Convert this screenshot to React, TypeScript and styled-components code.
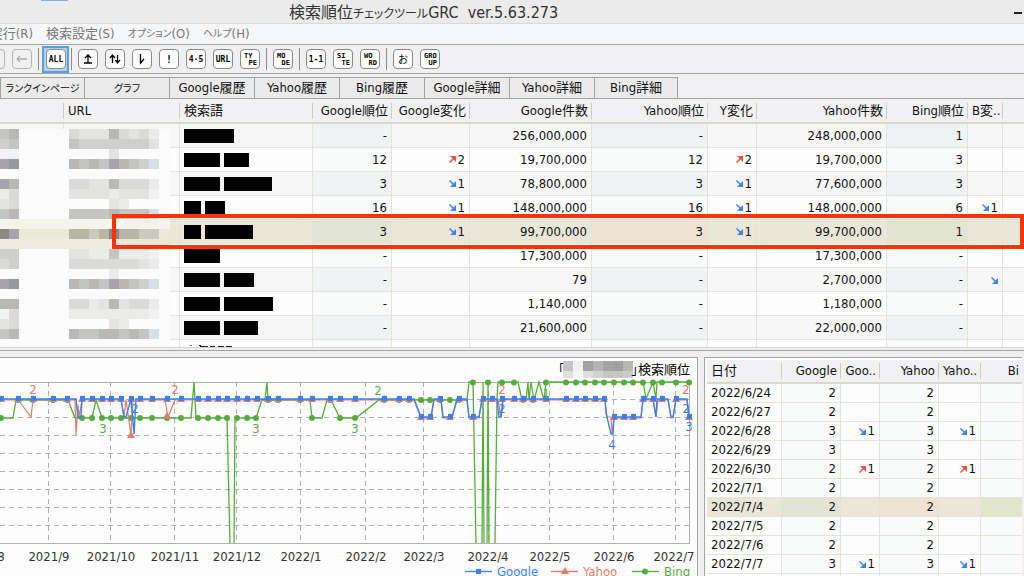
import React from "react";
import styled, { createGlobalStyle, css } from "styled-components";

const latin = `"DejaVu Sans Condensed", "Noto Sans", "Noto Sans CJK JP", sans-serif`;
const LINE = "#e6e4d8";
const EDGE = "#a5a49c";

const Global = createGlobalStyle`
  *, *::before, *::after { box-sizing: border-box; }
  body {
    margin: 0;
    background: #f0f0f2;
    color: #111;
    font-family: ${latin};
    font-size: 13px;
    line-height: 16px;
    font-feature-settings: "palt";
  }
  button { font: inherit; font-feature-settings: inherit; color: inherit; padding: 0; }
`;

const Window = styled.div`
  display: flex;
  flex-direction: column;
  height: 100vh;
  overflow: hidden;
`;

/* Katakana are set smaller than the kanji beside them. */
const Kana = styled.span<{ $size?: number }>`
  font-size: ${(p) => p.$size ?? 10}px;
`;

/* ---------- title and menu ---------- */
const TitleBar = styled.header`
  display: flex;
  align-items: center;
  justify-content: space-between;
  flex: none;
  height: 24px;
  padding: 3px 2px 0 289px;
  background: #ebebeb;
  border-bottom: 1px solid #d9d9d9;
`;
const Title = styled.h1`
  margin: 0;
  font-size: 16px;
  line-height: 20px;
  font-weight: 400;
  color: #333;
  white-space: pre;
`;
const Minimise = styled.button`
  width: 8px;
  height: 2px;
  margin-bottom: 1px;
  border: 0;
  background: #222;
`;
const TopMark = styled.div`
  position: absolute;
  top: 0;
  left: 41px;
  width: 27px;
  height: 1px;
  background: #7fb2e5;
`;
const MenuBar = styled.nav`
  display: flex;
  gap: 13px;
  flex: none;
  height: 21px;
  background: #f5f6f7;
  border-bottom: 1px solid ${EDGE};
`;
const MenuItem = styled.button<{ $w?: number }>`
  display: flex;
  align-items: center;
  justify-content: flex-end;
  flex: none;
  ${(p) => p.$w && `width: ${p.$w}px;`}
  border: 0;
  background: none;
  color: #777;
  white-space: nowrap;
`;

/* ---------- toolbar ---------- */
const ToolBar = styled.div`
  display: flex;
  align-items: center;
  gap: 7px;
  flex: none;
  height: 29px;
  border-bottom: 1px solid ${EDGE};
  overflow: hidden;
`;
const Key = styled.span<{ $dim?: boolean }>`
  display: flex;
  align-items: center;
  justify-content: center;
  flex: none;
  width: 20px;
  height: 20px;
  border: 1px solid ${(p) => (p.$dim ? "#b5b5b5" : "#8a8a86")};
  border-radius: 4px;
  background: ${(p) => (p.$dim ? "#f0f0f0" : "#fdfdfd")};
  color: ${(p) => (p.$dim ? "#aaa" : "#000")};
`;
const ToolButton = styled.button<{ $active?: boolean; $cut?: boolean }>`
  display: flex;
  align-items: center;
  justify-content: center;
  flex: none;
  width: 20px;
  height: 27px;
  border: 0;
  background: none;
  ${(p) =>
    p.$active &&
    css`
      width: 27px;
      margin: 0 -4px 0 -3px;
      border: 2px solid #5c9fe0;
      background: #b4d2f0;
    `}
  ${(p) =>
    p.$cut &&
    css`
      width: 5px;
      justify-content: flex-end;
    `}
`;
const Divider = styled.i`
  flex: none;
  width: 1px;
  height: 22px;
  margin: 0 -1px;
  background: #8c8c88;
`;

/* ---------- tabs ---------- */
const TabStrip = styled.div`
  display: flex;
  align-items: flex-end;
  flex: none;
  height: 25px;
  border-bottom: 1px solid ${EDGE};
`;
const Tab = styled.button`
  width: 85px;
  height: 21px;
  border: 1px solid ${EDGE};
  border-width: 1px 1px 0 0;
  background: #ebebec;
  white-space: nowrap;
  &:first-child { border-left-width: 1px; }
  &:last-child { width: 83px; }
`;

/* ---------- grids ---------- */
const Grid = styled.table`
  width: 100%;
  table-layout: fixed;
  border-collapse: separate;
  border-spacing: 0;
`;
const HeadRow = styled.tr<{ $h: number }>`
  height: ${(p) => p.$h}px;
`;
const Head = styled.th`
  padding: 3px 0;
  border-bottom: 2px solid #dad8cd;
  background: #f1f1f3;
  font-weight: 400;
`;
const HeadLabel = styled.div<{ $left?: boolean }>`
  height: 16px;
  padding: 0 3px 0 4px;
  border-right: 1px solid #cfcdc0;
  text-align: ${(p) => (p.$left ? "left" : "right")};
  white-space: nowrap;
  th:last-child > & { border-right: 0; }
`;
const Row = styled.tr<{ $h: number; $odd?: boolean; $sel?: boolean }>`
  height: ${(p) => p.$h}px;
  background: ${(p) => (p.$sel ? "#eae7d8" : p.$odd ? "#f7f7f8" : "#fdfdfd")};
`;
const tint = { g: "#e2e4d6", y: "#ede2d3", b: "#e3e6cf" };
const Cell = styled.td<{ $rank?: "g" | "y" | "b"; $odd?: boolean; $sel?: boolean; $left?: boolean }>`
  padding: 0 4px;
  border-right: 1px solid ${LINE};
  border-bottom: 1px solid ${LINE};
  text-align: ${(p) => (p.$left ? "left" : "right")};
  white-space: nowrap;
  ${(p) => p.$rank && `background: ${p.$sel ? tint[p.$rank] : p.$odd ? "#f0f3f4" : "#f9fafa"};`}
  &:last-child { border-right: 0; }
`;
const Change = styled.span`
  display: inline-flex;
  align-items: center;
  gap: 2px;
`;
const Masks = styled.div`
  display: flex;
  gap: 4px;
`;
const Mask = styled.span<{ $w: number }>`
  width: ${(p) => p.$w}px;
  height: 14px;
  background: #000;
`;

const RankPane = styled.section`
  position: relative;
  flex: none;
  height: 249px;
  overflow: hidden;
  background: #fdfdfd;
  border-bottom: 1px solid #d4d4d4;
`;
const Mosaic = styled.svg`
  position: absolute;
  top: 30px;
  left: 0;
`;
const Highlight = styled.div`
  position: absolute;
  top: 115px;
  left: 112px;
  right: 0;
  height: 35px;
  border: 4px solid #ff3300;
`;

const Lower = styled.div`
  display: flex;
  gap: 6px;
  flex: 1;
  min-height: 0;
  margin-top: 2px;
  padding: 6px 2px 0 0;
  border-top: 1px solid ${EDGE};
`;
const ChartPane = styled.section`
  display: flex;
  justify-content: flex-end;
  flex: 1;
  min-width: 0;
  border: 1px solid ${EDGE};
  border-width: 1px 1px 0 0;
  background: #fdfdfd;
  overflow: hidden;
`;
const ChartDrawing = styled.svg`
  flex: none;
`;
const HistoryPane = styled.section`
  flex: none;
  width: 318px;
  padding: 2px 0 0 2px;
  border: 1px solid ${EDGE};
  border-width: 1px 0 0 1px;
  background: #fdfdfd;
  overflow: hidden;
`;

/* ---------- icons ---------- */
type Glyph = string | string[];
const keyFont = `"DejaVu Sans Mono", "Noto Sans CJK JP", monospace`;

const arrows: Record<string, string> = {
  back: "M4 9H14M4 9L7 6M4 9L7 12",
  top: "M5 13H13M9 13V5M6 8L9 5L12 8",
  updown: "M6.500 13V5M4 8L6.500 5L9 8M11.500 5V13M9.500 10L11.500 13L14 10",
  hook: "M7.500 4V13L11 9",
};

function KeyFace({ g }: { g: Glyph }) {
  if (Array.isArray(g)) {
    return (
      <svg width="18" height="18" fontFamily={keyFont} fontSize="7" fontWeight="700">
        <text x="3" y="8">{g[0]}</text>
        <text x="16" y="15" textAnchor="end">{g[1]}</text>
      </svg>
    );
  }
  if (arrows[g]) {
    return (
      <svg width="18" height="18" fill="none" stroke="currentColor" strokeWidth="1.300">
        <path d={arrows[g]} />
      </svg>
    );
  }
  if (g === "お") {
    return (
      <svg width="18" height="18" fontFamily={keyFont} fontSize="10">
        <text x="9" y="13" textAnchor="middle">{g}</text>
      </svg>
    );
  }
  return (
    <svg width="18" height="18" fontFamily={keyFont} fontSize={g.length > 1 ? 8 : 10} fontWeight="700">
      <text x="9" y={g.length > 1 ? 12 : 13} textAnchor="middle">{g}</text>
    </svg>
  );
}

const Arrow = ({ up }: { up?: boolean }) => (
  <svg width="7" height="7" fill="none" stroke={up ? "#e8543f" : "#3f82f0"} strokeWidth="1.500">
    {up ? (
      <>
        <path d="M0.500 6.500L5 2" />
        <path d="M1 0H7V6L4 3Z" fill="#e8543f" stroke="none" />
      </>
    ) : (
      <>
        <path d="M0.500 0.500L5 5" />
        <path d="M7 1V7H1L4 4Z" fill="#3f82f0" stroke="none" />
      </>
    )}
  </svg>
);

function Delta({ v }: { v: string }) {
  if (!v) return null;
  return (
    <Change>
      <Arrow up={v[0] === "+"} />
      {v.slice(1)}
    </Change>
  );
}

/* ---------- data ---------- */
const tools: (Glyph | null)[] = [
  "top", "updown", "hook", "!", "4·5", "URL", ["TY", "PE"], null,
  ["MO", "DE"], null, "1-1", ["SI", "TE"], ["WO", "RD"], null, "お", ["GRO", "UP"],
];
const kanaTabs = ["ランクインページ", "グラフ"];
const tabs = ["Google履歴", "Yahoo履歴", "Bing履歴", "Google詳細", "Yahoo詳細", "Bing詳細"];

const rankCols: [string, number | null][] = [
  ["", 64], ["URL", 116], ["検索語", 133], ["Google順位", 79], ["Google変化", 78], ["Google件数", 122],
  ["Yahoo順位", 116], ["Y変化", 49], ["Yahoo件数", 130], ["Bing順位", 81], ["B変..", 35], ["", null],
];
type Rank = { m: number[]; v: string[] };
const ranks: Rank[] = [
  { m: [50], v: ["-", "", "256,000,000", "-", "", "248,000,000", "1", ""] },
  { m: [36, 25], v: ["12", "+2", "19,700,000", "12", "+2", "19,700,000", "3", ""] },
  { m: [36, 48], v: ["3", "-1", "78,800,000", "3", "-1", "77,600,000", "3", ""] },
  { m: [17, 20], v: ["16", "-1", "148,000,000", "16", "-1", "148,000,000", "6", "-1"] },
  { m: [17, 48], v: ["3", "-1", "99,700,000", "3", "-1", "99,700,000", "1", ""] },
  { m: [36], v: ["-", "", "17,300,000", "-", "", "17,300,000", "-", ""] },
  { m: [36, 30], v: ["-", "", "79", "-", "", "2,700,000", "-", "-"] },
  { m: [36, 49], v: ["-", "", "1,140,000", "-", "", "1,180,000", "-", ""] },
  { m: [36, 34], v: ["-", "", "21,600,000", "-", "", "22,000,000", "-", ""] },
  { m: [], v: ["", "", "", "", "", "", "", ""] },
];
const rankKind: Record<number, "g" | "y" | "b"> = { 0: "g", 3: "y", 6: "b" };

const historyCols: [string, number | null][] = [
  ["日付", 75], ["Google", 59], ["Goo..", 39], ["Yahoo", 59], ["Yaho..", 42], ["Bi", null],
];
const history: string[][] = [
  ["2022/6/24", "2", "", "2", ""],
  ["2022/6/27", "2", "", "2", ""],
  ["2022/6/28", "3", "-1", "3", "-1"],
  ["2022/6/29", "3", "", "3", ""],
  ["2022/6/30", "2", "+1", "2", "+1"],
  ["2022/7/1", "2", "", "2", ""],
  ["2022/7/4", "2", "", "2", ""],
  ["2022/7/5", "2", "", "2", ""],
  ["2022/7/6", "2", "", "2", ""],
  ["2022/7/7", "3", "-1", "3", "-1"],
  ["", "", "", "", ""],
];

/* One string per 10px band: two blocks at the left edge, then nine in the URL column. */
const mosaicShades: Record<string, string> = {
  a: "#98979a", b: "#a6a4aa", c: "#b9b8b5", d: "#c4c4c2", e: "#cfcfce", f: "#dadad8",
  g: "#e3e3e2", h: "#ebebea", i: "#f1f2f3", k: "#b8b4a6", l: "#8c8880", m: "#d8dfe6", n: "#ccc9bd",
};
const mosaic = [
  "dc fggg cfgfh", "ed deee eeeeg", "ii .... g....", "ba cdcd bcdem", ".. .... .....",
  "bc ffgg cfffh", "hf gggg hgggi", "gf .... gh...", "dc dddd cdddm", "",
  "lb kknk lkknn", "", "ee gghh dhhhi", "fe ffff fffgh", ".. .... h....",
  "ba cdcd bcdem", ".. .... .....", "cc ffhg cgffh", "if hhhh hhhhi", "gf .... gh...",
  "dc cddc cdcdm", "..",
];

function MosaicLayer() {
  const blocks: React.ReactNode[] = [];
  mosaic.forEach((line, r) => {
    const s = line.replace(/ /g, "");
    for (let i = 0; i < s.length; i++) {
      const fill = mosaicShades[s[i]];
      if (!fill) continue;
      const x = i < 2 ? i * 10 - 1 : 69 + (i - 2) * 10;
      blocks.push(<rect key={r + "-" + i} x={x} y={r * 10} width="10" height="10" fill={fill} />);
    }
  });
  return (
    <Mosaic width="170" height="219" shapeRendering="crispEdges">
      <rect width="170" height="219" fill="#fbfbfb" />
      <rect y="90" width="170" height="10" fill="#f4f4ea" />
      <rect y="100" width="170" height="20" fill="#ebe8da" />
      <rect y="110" width="112" height="10" fill="#eeece0" />
      {blocks}
    </Mosaic>
  );
}

/* ---------- chart ---------- */
const G = "#55ad3f", B = "#3c7ff0", Y = "#e27b69";
const months: [number, string][] = [
  [-16, "2021/8"], [49, "2021/9"], [111, "2021/10"], [175, "2021/11"], [237, "2021/12"], [301, "2022/1"],
  [366, "2022/2"], [424, "2022/3"], [488, "2022/4"], [550, "2022/5"], [614, "2022/6"], [674, "2022/7"],
];
const gridX = [48, 110, 174, 236, 300, 365, 423, 488, 549, 613, 675];
const gridY = [399, 417, 435, 453, 471, 489, 507, 525];

const topBlue = [1, 18, 33, 53, 67, 82, 92, 102, 111, 121, 131, 140, 152, 167, 181, 198, 208, 218, 227, 237, 247, 257, 268, 278,
  300, 312, 330, 340, 355, 384, 399, 409, 440, 459, 483, 492, 502, 514, 523, 533, 546, 566, 576, 585, 595, 604, 643, 653, 662, 676];
const lowBlue = [421, 430, 450, 473, 614, 624, 633, 689];
const greenLow = [1, 82, 92, 102, 111, 121, 131, 140, 152, 167, 181, 198, 208, 218, 227, 237, 247, 256, 312, 340, 355];
const greenMid = [18, 33, 53, 67, 268, 278, 300, 330, 384, 399, 409, 421, 430, 440, 450, 459, 523, 533];
const greenTop = [473, 488, 502, 514, 546, 566, 576, 585, 595, 604, 614, 624, 633, 643, 653, 662, 676, 689];

const greenPath =
  "M0 418H13L16 400H68L75 418H92L96 400L102 418H191L194 382L196 418H227L230 543M234 543L235 418H256L262 400H265L267 382L268 400H310L312 418H322L327 400H331L340 418H356L379 400H467L469 382H473L476 543M482 543L483 382L484 543M487 543L488 382L489 543M495 543L497 399L498 382H518L522 400H526L528 382L529 400L531 382L534 400L539 382L544 400L546 382H643L646 399L653 382L656 399L657 382H690";
const yahooPath =
  "M0 400H18L31 417L33 400H75L76 435L78 405L79 417L82 400H121L124 417L126 400L131 435L133 400H165L168 417L175 400H414L421 418H431L434 400H441L443 418H452L457 400H467L469 418H479L482 400H498L501 417L503 400H605L607 417H611L612 433L614 418H641L643 400H653L656 417L658 400H668L671 418H673L676 400H687L689 418";
const bluePath =
  "M0 399H76L78 417H81L82 399H121L124 417H126L131 399L134 434L136 399H414L421 417H431L434 399H441L443 417H452L457 399H467L469 417H479L482 399H497L499 417H501L503 399H605L606 413L611 434H613L614 417H641L643 399H653L656 417L657 399H668L671 417H673L676 399H687L689 417";

const triangle = (x: number, y: number) => `M${x - 4} ${y + 3}L${x} ${y - 4}L${x + 4} ${y + 3}Z`;
const tags: [number, number, string, string][] = [
  [33, 394, "2", Y], [175, 394, "2", Y], [103, 433, "3", G], [135, 413, "2", B], [256, 433, "3", G],
  [355, 433, "3", G], [378, 395, "2", G], [502, 394, "2", Y], [502, 413, "2", B], [546, 398, "1", G],
  [612, 449, "4", B], [686, 394, "2", Y], [686, 413, "2", B], [689, 431, "3", B],
];
const titleBlocks = [
  "#c4c4c6", "#f0f0f2", "#a2a2a2", "#b4b4b6", "#a4a4a4", "#a0a0a0", "#b6b6b4",
  "#e0e2e0", "#f4f4f4", "#e0dede", "#d0d2d0", "#c4c6c4", "#c6c6c8", "#cacaca",
];

function Chart() {
  return (
    <ChartDrawing width="697" height="218" viewBox="0 358 697 218" fontFamily={latin} fontSize="13">
      <g stroke="#b0b0b0" fill="none" shapeRendering="crispEdges">
        <g strokeDasharray="5 4">
          {gridY.map((y) => <path key={y} d={`M0 ${y}.5H690`} />)}
          {gridX.map((x) => <path key={x} d={`M${x}.5 382V543`} />)}
        </g>
        <path d="M0 382.500H689.500V543.500H0" />
      </g>
      <text x="558" y="374">「</text>
      {titleBlocks.map((c, i) => (
        <rect key={i} x={563 + (i % 7) * 10} y={i < 7 ? 361 : 371} width="10" height={i < 7 ? 10 : 7} fill={c} />
      ))}
      <text x="690" y="374" textAnchor="end">」検索順位</text>

      <path d={greenPath} fill="none" stroke={G} strokeWidth="1.300" />
      <g fill={G}>
        {greenLow.map((x) => <circle key={"l" + x} cx={x} cy="418" r="3" />)}
        {greenMid.map((x) => <circle key={"m" + x} cx={x} cy="400" r="3" />)}
        {greenTop.map((x) => <circle key={"t" + x} cx={x} cy="382.500" r="3" />)}
      </g>
      <path d={yahooPath} fill="none" stroke={Y} strokeWidth="1.200" />
      <g fill={Y}>
        {topBlue.map((x) => <path key={x} d={triangle(x, 399)} />)}
        {lowBlue.map((x) => <path key={x} d={triangle(x, 417)} />)}
        <path d={triangle(131, 435)} />
        <path d={triangle(167, 416)} />
      </g>
      <path d={bluePath} fill="none" stroke={B} strokeWidth="1.400" />
      <g fill={B} shapeRendering="crispEdges">
        {topBlue.map((x) => <rect key={x} x={x - 2} y="396" width="5" height="5" />)}
        {lowBlue.map((x) => <rect key={x} x={x - 2} y="414" width="5" height="5" />)}
      </g>
      <g textAnchor="middle">
        {tags.map(([x, y, t, c], i) => <text key={i} x={x} y={y} fill={c}>{t}</text>)}
      </g>
      <g textAnchor="middle" fill="#333">
        {months.map(([x, t]) => <text key={t} x={x} y="561">{t}</text>)}
      </g>
      <g strokeWidth="1.300">
        <path d="M465 571.500H492" stroke={B} />
        <rect x="476" y="569" width="5" height="5" fill={B} />
        <text x="497" y="576" fill={B}>Google</text>
        <path d="M551 571.500H578" stroke={Y} />
        <path d={triangle(565, 571)} fill={Y} />
        <text x="583" y="576" fill={Y}>Yahoo</text>
        <path d="M632 571.500H659" stroke={G} />
        <circle cx="645" cy="571.500" r="3" fill={G} />
        <text x="664" y="576" fill={G}>Bing</text>
      </g>
    </ChartDrawing>
  );
}

const Columns = ({ cols }: { cols: [string, number | null][] }) => (
  <colgroup>
    {cols.map(([, w], i) => <col key={i} width={w ?? undefined} />)}
  </colgroup>
);

/* Tops of the next row's letters, showing above the pane's edge. */
const RowPeek = () => (
  <svg width="60" height="22" shapeRendering="crispEdges">
    <path d="M6 5.500H8" stroke="#3a7fd0" />
    <path d="M15 5.500H17M16 6.500H24M26 6.500H31M34 6.500H40M42 6.500H48" stroke="#222" />
  </svg>
);

export default function App() {
  return (
    <>
      <Global />
      <Window>
        <TitleBar>
          <TopMark />
          <Title>検索順位<Kana $size={12}>チェックツール</Kana>{"GRC  ver.5.63.273"}</Title>
          <Minimise aria-label="最小化" />
        </TitleBar>
        <MenuBar>
          <MenuItem $w={33}>実行(R)</MenuItem>
          <MenuItem>検索設定(S)</MenuItem>
          <MenuItem><Kana>オプション</Kana>(O)</MenuItem>
          <MenuItem><Kana>ヘルプ</Kana>(H)</MenuItem>
        </MenuBar>
        <ToolBar role="toolbar">
          <ToolButton $cut aria-label="進む"><Key $dim><KeyFace g="back" /></Key></ToolButton>
          <ToolButton aria-label="戻る"><Key $dim><KeyFace g="back" /></Key></ToolButton>
          <Divider />
          <ToolButton $active><Key><KeyFace g="ALL" /></Key></ToolButton>
          <Divider />
          {tools.map((g, i) =>
            g === null ? <Divider key={i} /> : (
              <ToolButton key={i}><Key><KeyFace g={g} /></Key></ToolButton>
            )
          )}
        </ToolBar>
        <TabStrip>
          {kanaTabs.map((t) => <Tab key={t}><Kana>{t}</Kana></Tab>)}
          {tabs.map((t) => <Tab key={t}>{t}</Tab>)}
        </TabStrip>

        <RankPane>
          <Grid>
            <Columns cols={rankCols} />
            <thead>
              <HeadRow $h={25}>
                {rankCols.map(([t], i) => <Head key={i}><HeadLabel $left={i < 3}>{t}</HeadLabel></Head>)}
              </HeadRow>
            </thead>
            <tbody>
              {ranks.map((r, n) => {
                const odd = n % 2 === 0;
                const sel = n === 4;
                return (
                  <Row key={n} $h={24} $odd={odd} $sel={sel}>
                    <Cell />
                    <Cell />
                    <Cell $left>
                      {r.m.length ? <Masks>{r.m.map((w, i) => <Mask key={i} $w={w} />)}</Masks> : <RowPeek />}
                    </Cell>
                    {r.v.map((v, i) => (
                      <Cell key={i} $rank={rankKind[i]} $odd={odd} $sel={sel}>
                        {i === 1 || i === 4 || i === 7 ? <Delta v={v} /> : v}
                      </Cell>
                    ))}
                    <Cell />
                  </Row>
                );
              })}
            </tbody>
          </Grid>
          <MosaicLayer />
          <Highlight />
        </RankPane>

        <Lower>
          <ChartPane><Chart /></ChartPane>
          <HistoryPane>
            <Grid>
              <Columns cols={historyCols} />
              <thead>
                <HeadRow $h={23}>
                  {historyCols.map(([t], i) => <Head key={i}><HeadLabel $left={i === 0}>{t}</HeadLabel></Head>)}
                </HeadRow>
              </thead>
              <tbody>
                {history.map((r, n) => {
                  const sel = n === 6;
                  return (
                    <Row key={n} $h={19} $sel={sel}>
                      <Cell $left>{r[0]}</Cell>
                      <Cell $rank="g" $sel={sel}>{r[1]}</Cell>
                      <Cell><Delta v={r[2]} /></Cell>
                      <Cell $rank="y" $sel={sel}>{r[3]}</Cell>
                      <Cell><Delta v={r[4]} /></Cell>
                      <Cell $rank="b" $sel={sel} />
                    </Row>
                  );
                })}
              </tbody>
            </Grid>
          </HistoryPane>
        </Lower>
      </Window>
    </>
  );
}
